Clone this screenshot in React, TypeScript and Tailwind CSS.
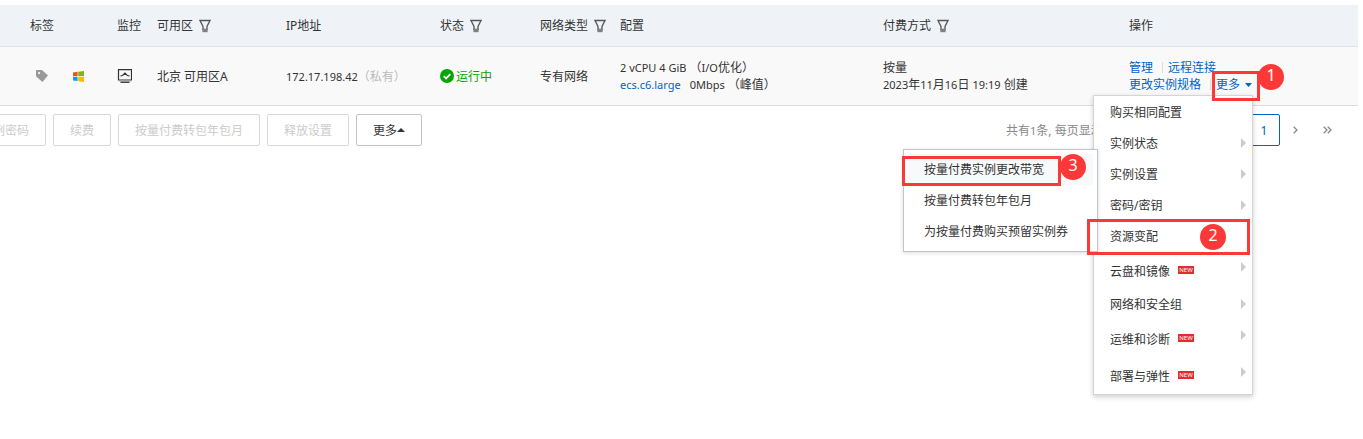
import type { ReactNode } from "react";

interface MenuEntry {
  label: string;
  isNew?: boolean;
  arrow?: boolean;
  active?: boolean;
}

const menuEntries: MenuEntry[] = [
  { label: "购买相同配置" },
  { label: "实例状态", arrow: true },
  { label: "实例设置", arrow: true },
  { label: "密码/密钥", arrow: true },
  { label: "资源变配", active: true },
  { label: "云盘和镜像", arrow: true, isNew: true },
  { label: "网络和安全组", arrow: true },
  { label: "运维和诊断", arrow: true, isNew: true },
  { label: "部署与弹性", arrow: true, isNew: true },
];

const batchActions = ["重置实例密码", "续费", "按量付费转包年包月", "释放设置"];

function FilterIcon() {
  return (
    <svg className="h-[14px] w-3 shrink-0" viewBox="0 0 12 14" fill="none">
      <path d="M1 1.5h10L8 7.5v3H4v-3z" stroke="#555" strokeWidth="1.3" />
      <path d="M3.4 10h5.2v3.2H3.4z" fill="#808080" />
    </svg>
  );
}

function TagIcon() {
  return (
    <svg className="h-3 w-3" viewBox="0 0 12 12">
      <path
        d="M.5 0H6l6 5.6L6.4 12 0 6.2V.5zM3.1 2a1.1 1.1 0 1 0 0 2.2 1.1 1.1 0 0 0 0-2.2z"
        fill="#999"
        fillRule="evenodd"
      />
    </svg>
  );
}

function WindowsIcon() {
  return (
    <svg className="h-[11px] w-[11px]" viewBox="0 0 11 11">
      <path d="M0 1.4 4.6.8V5H0z" fill="#f25022" />
      <path d="M5.2.7 11 0v5H5.2z" fill="#7fba00" />
      <path d="M0 5.7h4.600V10L0 9.4z" fill="#00a4ef" />
      <path d="M5.2 5.7H11V11l-5.8-.8z" fill="#ffb900" />
    </svg>
  );
}

function MonitorIcon() {
  return (
    <svg className="h-[14px] w-[15px]" viewBox="0 0 15 14" fill="none">
      <path d="M1.5.6h13V11h-13z" stroke="#333" strokeWidth="1.2" />
      <path d="M3.500 6.800l2-.3L8 4.200l2.300 2.300 2.200.3" stroke="#333" strokeWidth="1.2" />
      <path d="M2 11.600h12v1H2z" fill="#aaa" />
      <path d="M3.500 12.600h9V14h-9z" fill="#444" />
    </svg>
  );
}

function RunningIcon() {
  return (
    <svg className="h-[14px] w-[14px]" viewBox="0 0 14 14" fill="none">
      <circle cx="7" cy="7" r="7" fill="#00a700" />
      <path d="M3.8 7.1l2.300 2.300 4.200-4.200" stroke="#fff" strokeWidth="1.8" />
    </svg>
  );
}

// Latin text sits one size below the Chinese around it
function Latin({ children }: { children: ReactNode }) {
  return <span className="text-[11px]">{children}</span>;
}

function Divider() {
  return <span className="mr-[5px] ml-[9px] h-[11px] w-px bg-[#ddd]" />;
}

function StepBadge({ step, className }: { step: number; className: string }) {
  return (
    <span
      className={`absolute flex h-[26px] w-[26px] items-center justify-center rounded-full bg-[#fd3838] pb-1 text-base leading-4 text-white ${className}`}
    >
      {step}
    </span>
  );
}

function Outline({ className }: { className: string }) {
  return <span className={`pointer-events-none absolute border-3 border-[#fd3838] ${className}`} />;
}

function Submenu() {
  return (
    <ul className="absolute top-[-72px] right-[154px] w-[195px] border border-[#c0c4cc] bg-white p-1 shadow-[0_1px_4px_rgba(0,0,0,0.15)]">
      <li className="relative bg-[#f7f9fa]">
        <button className="block h-[31px] w-full pl-4 text-left">按量付费实例更改带宽</button>
        <Outline className="top-[2px] left-[-6px] h-[30px] w-[159px]" />
        <StepBadge step={3} className="top-0 right-[7px]" />
      </li>
      <li>
        <button className="block h-[31px] w-full pl-4 text-left">按量付费转包年包月</button>
      </li>
      <li>
        <button className="block h-[31px] w-full pl-4 text-left">为按量付费购买预留实例券</button>
      </li>
    </ul>
  );
}

function MoreMenu() {
  return (
    <ul className="absolute top-[19px] right-0 w-40 border border-[#d5d5d5] bg-white pt-px text-[#333] shadow-[0_2px_5px_rgba(0,0,0,0.2)]">
      {menuEntries.map((entry) => (
        <li key={entry.label} className="relative">
          <button
            className={`flex w-full items-start justify-between pr-[6px] pl-4 text-left ${entry.isNew ? "h-[37px]" : "h-[31px]"}`}
          >
            <span className={`flex items-center gap-2 ${entry.isNew ? "pt-[11px]" : "h-[31px]"}`}>
              {entry.label}
              {entry.isNew && (
                <span className="mb-1 flex h-2 w-4 items-center justify-center bg-[#e02d2d] text-[6px] leading-none text-white">
                  NEW
                </span>
              )}
            </span>
            {entry.arrow && (
              <svg className="mt-[10px] h-[10px] w-[5px]" viewBox="0 0 5 10">
                <path d="M0 0l5 5-5 5z" fill="#ccc" />
              </svg>
            )}
          </button>
          {entry.active && (
            <>
              <Submenu />
              <Outline className="top-[-2px] right-[2px] h-9 w-[163px]" />
              <StepBadge step={2} className="top-[3px] right-[26px]" />
            </>
          )}
        </li>
      ))}
    </ul>
  );
}

function FilterHead({ children }: { children: string }) {
  return (
    <th className="font-normal" scope="col">
      <span className="flex items-center gap-[6px]">
        {children}
        <FilterIcon />
      </span>
    </th>
  );
}

function InstanceTable() {
  return (
    <table className="w-full table-fixed border-separate border-spacing-0 text-left">
      <colgroup>
        <col className="w-[117px]" />
        <col className="w-10" />
        <col className="w-[129px]" />
        <col className="w-[154px]" />
        <col className="w-[100px]" />
        <col className="w-20" />
        <col className="w-[263px]" />
        <col className="w-[246px]" />
        <col />
      </colgroup>
      <thead>
        <tr className="h-[42px] bg-[#eff3f8] *:border-b *:border-[#dfe3e8]">
          <th className="pl-[30px] font-normal" scope="col">标签</th>
          <th className="font-normal" scope="col">监控</th>
          <FilterHead>可用区</FilterHead>
          <th className="font-normal" scope="col">IP地址</th>
          <FilterHead>状态</FilterHead>
          <FilterHead>网络类型</FilterHead>
          <th className="font-normal" scope="col">配置</th>
          <FilterHead>付费方式</FilterHead>
          <th className="font-normal" scope="col">操作</th>
        </tr>
      </thead>
      <tbody>
        <tr className="h-[59px] bg-[#f9f9f9] *:border-b *:border-[#d9dce0]">
          <td className="pl-9">
            <span className="flex items-center gap-[25px]">
              <TagIcon />
              <WindowsIcon />
            </span>
          </td>
          <td><MonitorIcon /></td>
          <td>北京 可用区A</td>
          <td>
            <Latin>172.17.198.42</Latin>
            <span className="text-[#bbb]">（私有）</span>
          </td>
          <td>
            <span className="flex items-center gap-[2px] text-[#00a700]">
              <RunningIcon />
              运行中
            </span>
          </td>
          <td>专有网络</td>
          <td>
            <div><Latin>2 vCPU 4 GiB</Latin> （<Latin>I/O</Latin>优化）</div>
            <div>
              <a href="#spec" className="text-[#0064c8]"><Latin>ecs.c6.large</Latin></a>
              <span className="ml-[9px]"><Latin>0Mbps</Latin> （峰值）</span>
            </div>
          </td>
          <td>
            <div>按量</div>
            <div>
              <Latin>2023</Latin>年<Latin>11</Latin>月<Latin>16</Latin>日 <Latin>19:19</Latin> 创建
            </div>
          </td>
          <td className="text-[#0064c8]">
            <div className="flex items-center">
              <a href="#manage">管理</a>
              <Divider />
              <a href="#connect">远程连接</a>
            </div>
            <div className="flex items-center">
              <a href="#resize">更改实例规格</a>
              <Divider />
              <div className="relative">
                <button className="flex items-center gap-[5px] pr-px">
                  更多
                  <svg className="h-1 w-[7px]" viewBox="0 0 7 4">
                    <path d="M0 0h7L3.5 4z" fill="currentColor" />
                  </svg>
                </button>
                <MoreMenu />
                <Outline className="top-[-5px] left-[-4px] h-[30px] w-12" />
                <StepBadge step={1} className="top-[-12px] left-[42px]" />
              </div>
            </div>
          </td>
        </tr>
      </tbody>
    </table>
  );
}

function Toolbar() {
  return (
    <div className="flex items-center justify-between pt-2">
      <div className="-ml-[60px] flex shrink-0 gap-[7px]">
        {batchActions.map((label) => (
          <button key={label} disabled className="h-8 rounded-xs border border-[#d5d8dd] px-4 text-[#ccc]">
            {label}
          </button>
        ))}
        <button className="flex h-8 items-center rounded-xs border border-[#c0c6cc] px-4">
          更多
          <svg className="h-1 w-2" viewBox="0 0 8 4">
            <path d="M0 4h8L4 0z" fill="#333" />
          </svg>
        </button>
      </div>
      <nav className="flex items-center pr-[14px] text-[#888]">
        <span className="w-[242px]">共有<Latin>1</Latin>条, 每页显示</span>
        <button className="h-8 w-8 rounded-xs border border-[#0064c8] text-[#0064c8]">1</button>
        <button className="flex h-8 w-[31px] items-center justify-center" aria-label="下一页">
          <svg className="h-2 w-[5px]" viewBox="0 0 5 8" fill="none">
            <path d="M.7.7L4 4 .7 7.3" stroke="#888" strokeWidth="1.3" />
          </svg>
        </button>
        <button className="flex h-8 w-[33px] items-center justify-center" aria-label="末页">
          <svg className="h-2 w-[9px]" viewBox="0 0 9 8" fill="none">
            <path d="M.7.7L4 4 .7 7.3M4.7.7L8 4 4.7 7.3" stroke="#888" strokeWidth="1.3" />
          </svg>
        </button>
      </nav>
    </div>
  );
}

export default function App() {
  return (
    <main className="min-h-screen overflow-hidden bg-white pt-[5px] pr-[5px] font-['Noto_Sans','Noto_Sans_CJK_SC',sans-serif] text-xs leading-[17px] text-[#333]">
      <InstanceTable />
      <Toolbar />
    </main>
  );
}
